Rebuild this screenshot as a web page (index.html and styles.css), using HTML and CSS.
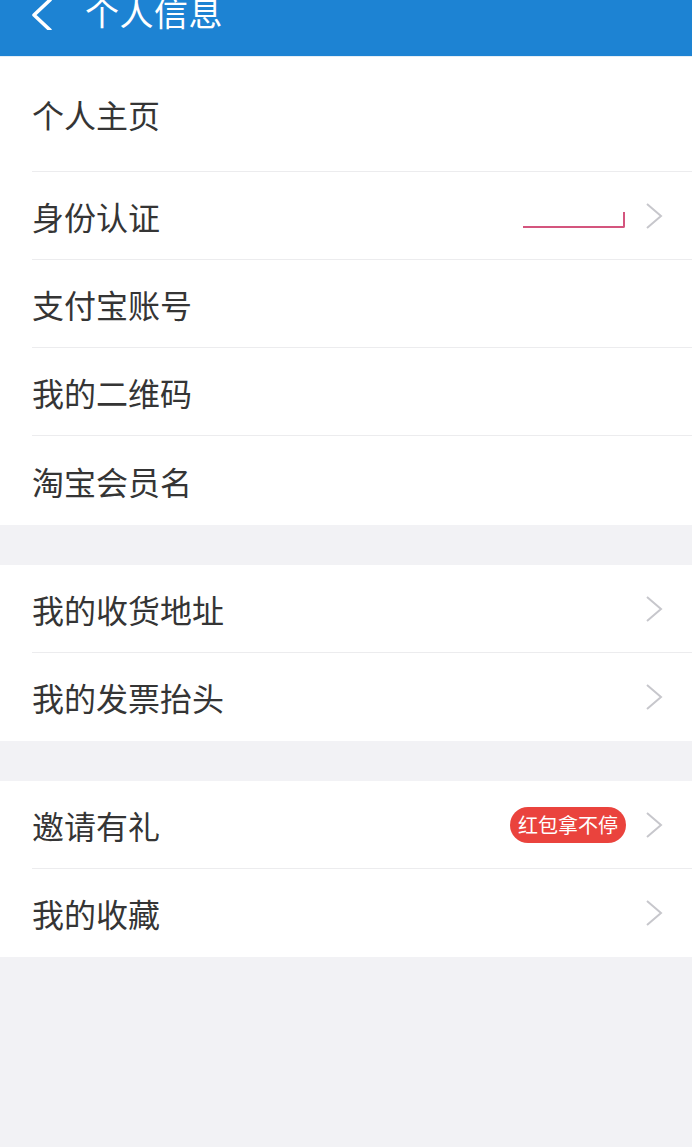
FILE: index.html
```html
<!DOCTYPE html>
<html lang="zh-CN">
<head>
<meta charset="utf-8">
<title>个人信息</title>
<link rel="stylesheet" href="styles.css">
</head>
<body>
<header class="topbar">
  <svg class="back" viewBox="0 0 24 32" width="24" height="32" aria-hidden="true">
    <path d="M20 2 L4 17 L20 32" fill="none" stroke="#fff" stroke-width="3.6" stroke-linecap="round" stroke-linejoin="round"/>
  </svg>
  <h1 class="title">个人信息</h1>
</header>

<section class="group">
  <div class="row row-tall"><div class="row-body"><span class="label">个人主页</span></div></div>
  <div class="row"><div class="row-body"><span class="label">身份认证</span><span class="masked"></span><svg class="chev" viewBox="0 0 18 28" width="18" height="28"><path d="M2 2 L16 14 L2 26" fill="none" stroke="#c7c7cc" stroke-width="2"/></svg></div></div>
  <div class="row"><div class="row-body"><span class="label">支付宝账号</span></div></div>
  <div class="row"><div class="row-body"><span class="label">我的二维码</span></div></div>
  <div class="row"><div class="row-body"><span class="label">淘宝会员名</span></div></div>
</section>

<section class="group">
  <div class="row"><div class="row-body"><span class="label">我的收货地址</span><svg class="chev" viewBox="0 0 18 28" width="18" height="28"><path d="M2 2 L16 14 L2 26" fill="none" stroke="#c7c7cc" stroke-width="2"/></svg></div></div>
  <div class="row"><div class="row-body"><span class="label">我的发票抬头</span><svg class="chev" viewBox="0 0 18 28" width="18" height="28"><path d="M2 2 L16 14 L2 26" fill="none" stroke="#c7c7cc" stroke-width="2"/></svg></div></div>
</section>

<section class="group">
  <div class="row"><div class="row-body"><span class="label">邀请有礼</span><span class="badge">红包拿不停</span><svg class="chev" viewBox="0 0 18 28" width="18" height="28"><path d="M2 2 L16 14 L2 26" fill="none" stroke="#c7c7cc" stroke-width="2"/></svg></div></div>
  <div class="row"><div class="row-body"><span class="label">我的收藏</span><svg class="chev" viewBox="0 0 18 28" width="18" height="28"><path d="M2 2 L16 14 L2 26" fill="none" stroke="#c7c7cc" stroke-width="2"/></svg></div></div>
</section>
</body>
</html>
```

FILE: styles.css
```css
html, body {
  margin: 0;
  padding: 0;
}
body {
  background: #f2f2f5;
  font-family: "Noto Sans CJK SC", "Noto Sans", sans-serif;
  color: #333;
  min-height: 1147px;
}
.topbar {
  background: #1d83d3;
  border-bottom: 1px solid #e4eef6;
  display: flex;
  align-items: flex-end;
  box-sizing: content-box;
  height: 29px;
  padding: 0 0 27px 30px;
  overflow: hidden;
}
.back {
  flex: none;
  margin-bottom: -1px;
}
.title {
  margin: 0 0 0 31px;
  font-size: 34px;
  line-height: 34px;
  font-weight: normal;
  color: #fff;
  letter-spacing: 0.5px;
}
.group {
  background: #fff;
  margin-bottom: 40px;
}
.row {
  padding-left: 32px;
}
.row-body {
  height: 87px;
  display: flex;
  align-items: center;
  padding-right: 29px;
  border-bottom: 1px solid #ececee;
}
.row-tall .row-body {
  height: 114px;
}
.row:last-child .row-body {
  border-bottom: none;
  height: 88px;
}
.group:first-of-type .row:last-child .row-body {
  height: 89px;
}
.label {
  flex: 1;
  font-size: 32px;
  line-height: 40px;
  color: #353535;
}
.chev {
  flex: none;
  display: block;
}
.masked {
  width: 100px;
  height: 14px;
  margin-top: 8px;
  margin-right: 20px;
  border-bottom: 2px solid #d4557e;
  border-right: 2px solid #d4557e;
  border-bottom-right-radius: 2px;
}
.badge {
  flex: none;
  background: #ea433d;
  color: #fff;
  font-size: 20px;
  line-height: 36px;
  height: 36px;
  padding: 0 8px;
  border-radius: 18px;
  margin-right: 19px;
}
```
